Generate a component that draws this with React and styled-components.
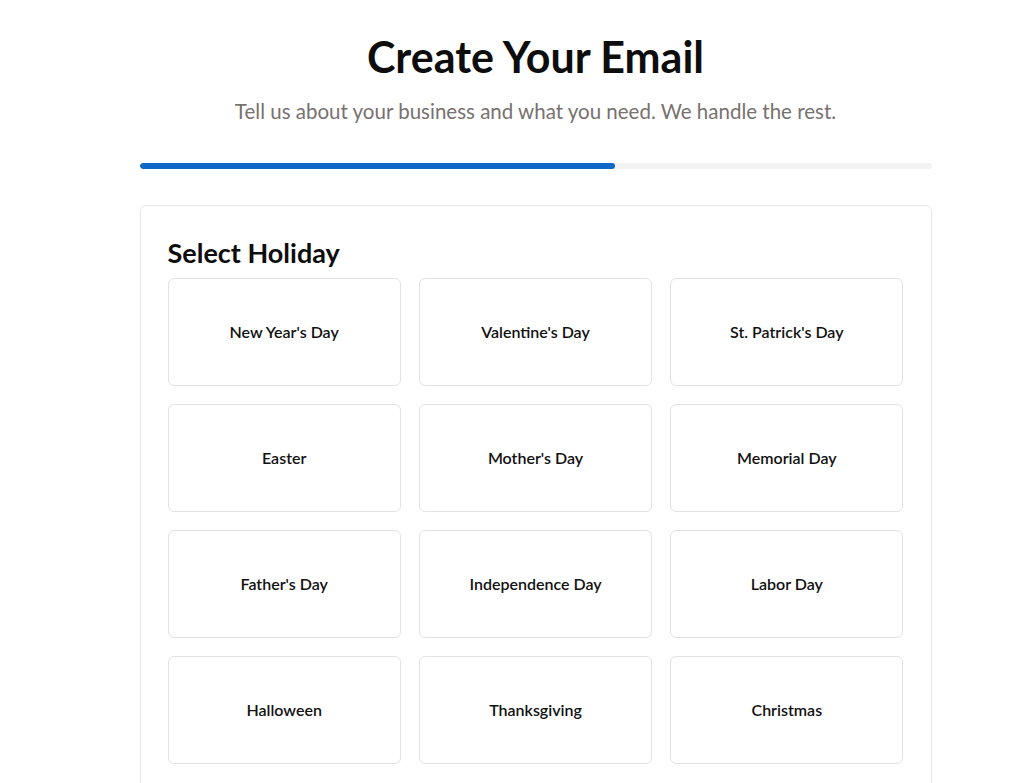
import React from 'react';
import styled, { createGlobalStyle } from 'styled-components';

const GlobalStyle = createGlobalStyle`
    * { box-sizing: border-box; }
    body {
        margin: 0;
        background: #ffffff;
        font-family: Lato, "Noto Sans", sans-serif;
        color: #111111;
    }
`;

const Page = styled.div`
    padding: 30px 0 0 36px;
`;

const Container = styled.main`
    width: 792px;
    margin: 0 auto;
`;

const Header = styled.header`
    text-align: center;
`;

const Title = styled.h1`
    margin: 0;
    font-size: 43px;
    font-weight: 700;
    line-height: 54px;
    color: #0d0d0d;
`;

const Subtitle = styled.p`
    margin: 14px 0 0;
    font-size: 20.5px;
    line-height: 26px;
    color: #77716f;
`;

const Track = styled.div`
    margin-top: 39px;
    height: 6px;
    border-radius: 3px;
    background: #f2f2f2;
    overflow: hidden;
`;

const Fill = styled.div`
    height: 100%;
    border-radius: 3px;
    background: #0f67c7;
`;

const Card = styled.section`
    margin-top: 36px;
    border: 1px solid #e6e6e6;
    border-radius: 6px;
    padding: 30px 27px 27px;
`;

const CardTitle = styled.h2`
    margin: 0 0 8px;
    font-size: 27px;
    line-height: 34px;
    font-weight: 700;
    color: #0d0d0d;
`;

const HolidayGrid = styled.div`
    display: grid;
    grid-template-columns: repeat(3, 1fr);
    gap: 18px;
`;

const HolidayButton = styled.button`
    height: 108px;
    padding: 0 0 2px;
    border: 1px solid #e2e2e2;
    border-radius: 6px;
    background: #ffffff;
    font-family: inherit;
    font-size: 16px;
    font-weight: 600;
    color: #111111;
    cursor: pointer;
    display: flex;
    align-items: center;
    justify-content: center;

    &:hover {
        border-color: #0f67c7;
    }
`;

const holidays = [
    "New Year's Day", "Valentine's Day", "St. Patrick's Day",
    'Easter', "Mother's Day", 'Memorial Day',
    "Father's Day", 'Independence Day', 'Labor Day',
    'Halloween', 'Thanksgiving', 'Christmas',
];

export default function App() {
    const step = 3;
    const totalSteps = 5;

    return (
        <>
            <GlobalStyle />
            <Page>
                <Container>
                    <Header>
                        <Title>Create Your Email</Title>
                        <Subtitle>Tell us about your business and what you need. We handle the rest.</Subtitle>
                    </Header>
                    <Track>
                        <Fill style={{ width: `${(step / totalSteps) * 100}%` }} />
                    </Track>
                    <Card>
                        <CardTitle>Select Holiday</CardTitle>
                        <HolidayGrid>
                            {holidays.map(name => (
                                <HolidayButton key={name}>{name}</HolidayButton>
                            ))}
                        </HolidayGrid>
                    </Card>
                </Container>
            </Page>
        </>
    );
}
